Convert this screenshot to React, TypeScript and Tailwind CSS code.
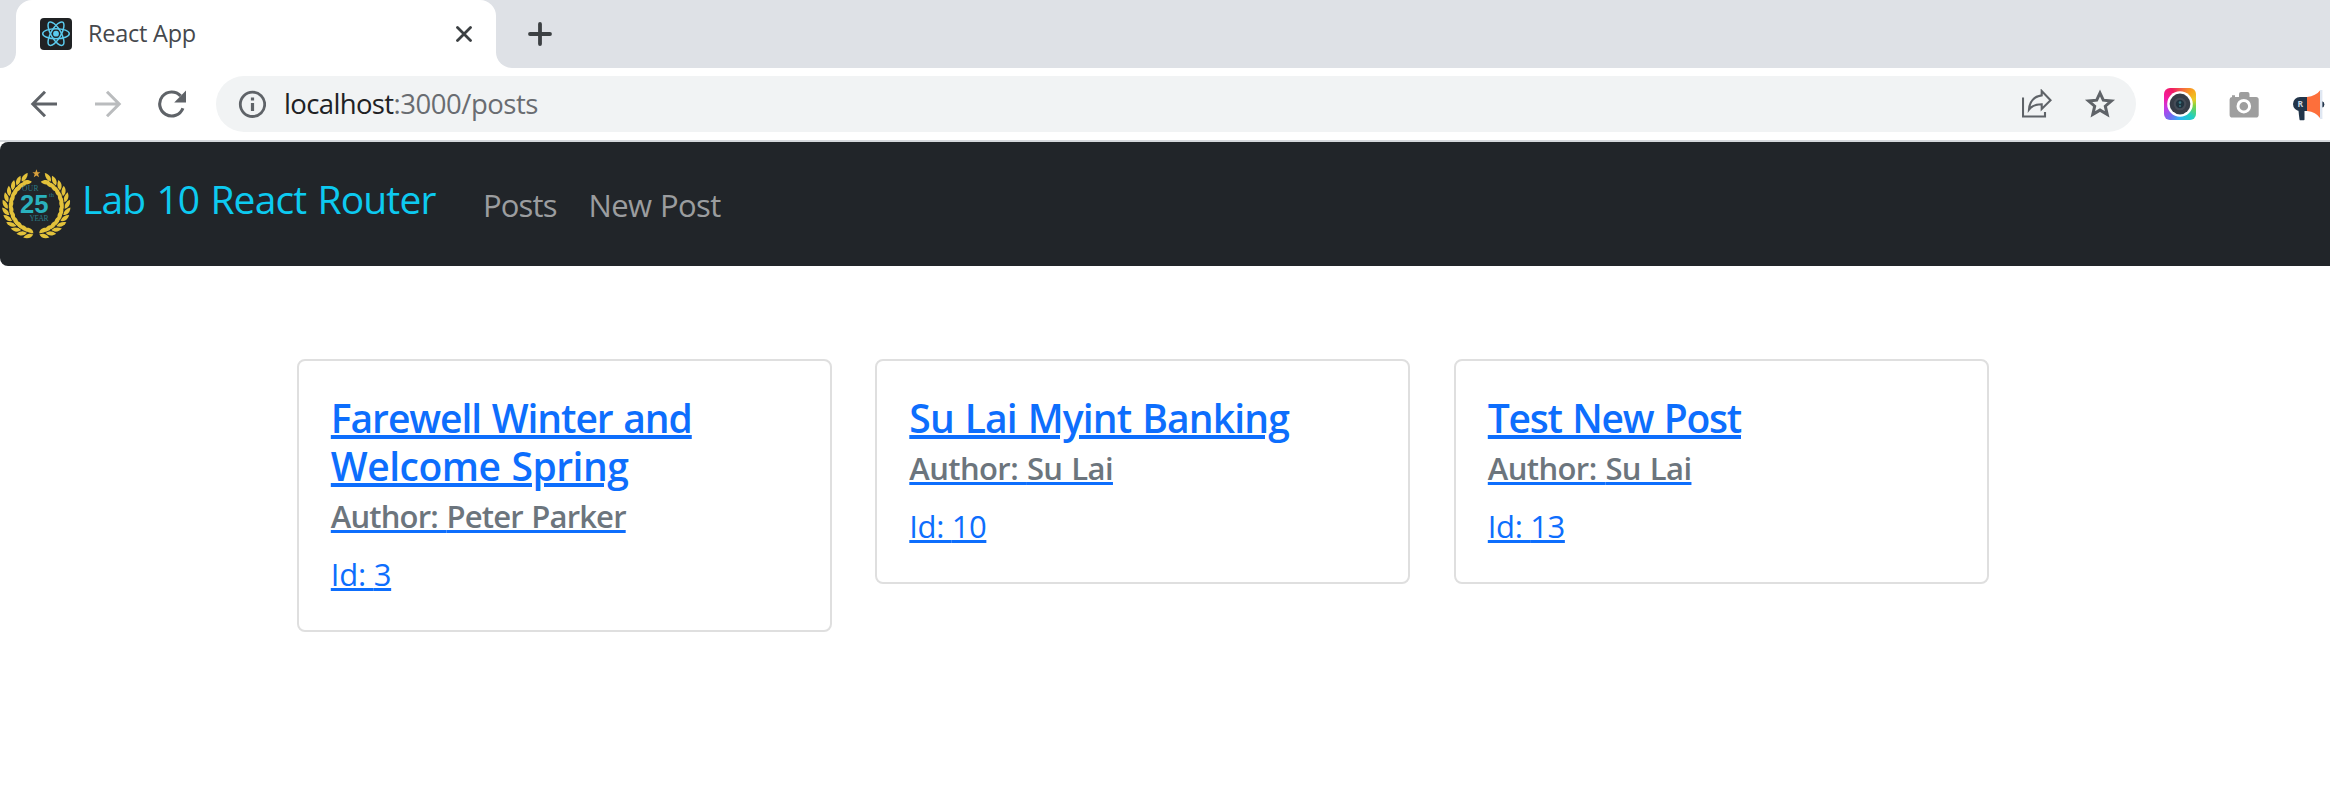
import type { ReactNode } from "react";

type Post = {
  id: ReactNode;
  idClass: string;
  lines: { text: string; className: string }[];
  author: string;
  authorClass: string;
};

const posts: Post[] = [
  {
    id: 3,
    idClass: "tracking-[-0.24px]",
    lines: [
      { text: "Farewell Winter and", className: "tracking-[-1.05px]" },
      { text: "Welcome Spring", className: "tracking-[-0.5px]" },
    ],
    author: "Peter Parker",
    authorClass: "tracking-[-0.84px]",
  },
  {
    id: 10,
    idClass: "tracking-[-0.37px]",
    lines: [{ text: "Su Lai Myint Banking", className: "tracking-[-0.83px]" }],
    author: "Su Lai",
    authorClass: "tracking-[-0.6px]",
  },
  {
    id: 13,
    idClass: "tracking-[-0.37px]",
    lines: [{ text: "Test New Post", className: "tracking-[-1.23px]" }],
    author: "Su Lai",
    authorClass: "tracking-[-0.6px]",
  },
];

function ReactFavicon() {
  return (
    <svg className="size-8 shrink-0" viewBox="0 0 32 32">
      <rect width="32" height="32" rx="4" fill="#202224" />
      <g fill="none" stroke="#5bcbee" strokeWidth="1.5">
        <ellipse cx="16" cy="15.7" rx="13.3" ry="5" />
        <ellipse cx="16" cy="15.7" rx="13.3" ry="5" transform="rotate(60 16 15.7)" />
        <ellipse cx="16" cy="15.7" rx="13.3" ry="5" transform="rotate(120 16 15.7)" />
      </g>
      <circle cx="16" cy="15.7" r="2.9" fill="#5bcbee" />
    </svg>
  );
}

function TabStrip() {
  return (
    <div className="flex h-[68px] bg-[#dee1e6]">
      <div className="w-4 bg-white">
        <div className="h-full w-4 rounded-br-2xl bg-[#dee1e6]" />
      </div>
      <div className="flex w-[480px] items-center rounded-t-2xl bg-white pl-6 pr-6">
        <ReactFavicon />
        <span className="-mt-px ml-4 flex-1 text-[23.5px] tracking-[-0.24px] text-[#45484d]">React App</span>
        <svg className="size-4" viewBox="0 0 16 16" fill="none" stroke="#3c4043" strokeWidth="2.8" strokeLinecap="round">
          <path d="M1.5 1.5l13 13M14.5 1.5l-13 13" />
        </svg>
      </div>
      <div className="w-4 bg-white">
        <div className="h-full w-4 rounded-bl-2xl bg-[#dee1e6]" />
      </div>
      <svg className="ml-4 mt-[22px] size-6" viewBox="0 0 24 24" fill="none" stroke="#3c4043" strokeWidth="3.8" strokeLinecap="round">
        <path d="M12 2v20M2 12h20" />
      </svg>
    </div>
  );
}

function Toolbar() {
  return (
    <div className="flex h-[74px] items-start border-b-2 border-[#d5d8dc] bg-white pt-2">
      <div className="flex h-14 w-[216px] shrink-0 items-center pl-[30px]">
        <svg className="h-7 w-7" viewBox="0 0 28 28" fill="none" stroke="#5f6368" strokeWidth="3">
          <path d="M27 14H3M15 1.8L2.8 14L15 26.2" />
        </svg>
        <svg className="ml-9 h-7 w-7" viewBox="0 0 28 28" fill="none" stroke="#babcbe" strokeWidth="3">
          <path d="M1 14h24M13 1.8L25.2 14L13 26.2" />
        </svg>
        <svg className="ml-9 h-7 w-7" viewBox="0 0 28 28">
          <path d="M24.9 18.2A12 12 0 1 1 22.6 5.9" fill="none" stroke="#5f6368" strokeWidth="3.1" />
          <path d="M28 0.6V12.4H16.2Z" fill="#5f6368" />
        </svg>
      </div>
      <div className="flex h-14 w-[1920px] shrink-0 items-center rounded-full bg-[#f1f3f4] pl-[22px] pr-5">
        <svg className="size-7" viewBox="0 0 28 28" fill="none" stroke="#5f6368" strokeWidth="2.8">
          <circle cx="14.5" cy="14.3" r="12.2" />
          <path d="M14.5 12.9v8M14.5 7.5v3" strokeWidth="3.2" />
        </svg>
        <div className="ml-[18px] flex-1 text-[27.5px] text-[#696c71]">
          <span className="tracking-[-0.64px] text-[#202124]">localhost</span>
          <span className="tracking-[-0.46px]">:3000/posts</span>
        </div>
        <svg className="size-[30px]" viewBox="0 0 30 30" fill="none" stroke="#5f6368" strokeWidth="2.1">
          <path d="M1 8.5V27.5H23V23" />
          <path d="M7 20.5C7.6 12.4 12.5 7.5 19.7 6.4V2L28.6 11.2L19.7 20V15.2C14.2 15.2 9.8 16.8 7 20.5Z" />
        </svg>
        <svg className="ml-8 size-8" viewBox="0 0 32 32" fill="none" stroke="#5f6368" strokeWidth="3">
          <path d="M16 5L19.3 12.2L27.4 12.9L21.3 18.2L23.2 26.4L16 22.1L8.8 26.4L10.7 18.2L4.6 12.9L12.7 12.2Z" />
        </svg>
      </div>
      <div className="ml-7 mt-3 size-8 shrink-0 rounded-md bg-[conic-gradient(from_0deg,#f1584b,#f9a41c_12%,#e9cb28_20%,#7fd43f_27%,#22cfc0_38%,#2bb5f5_50%,#6f6df2_60%,#c23be8_70%,#f51aa0_82%,#f01c63_92%,#f1584b)]">
        <svg className="size-8" viewBox="0 0 32 32">
          <circle cx="16" cy="16" r="12.8" fill="#fff" />
          <circle cx="16" cy="16" r="10.4" fill="#373d47" />
          <circle cx="16" cy="16" r="6.3" fill="#454c57" />
          <circle cx="16" cy="16" r="4.2" fill="#20333f" />
          <circle cx="16" cy="14.6" r="1.3" fill="#3b7480" />
          <circle cx="16" cy="18" r="1" fill="#3b7480" />
        </svg>
      </div>
      <svg className="ml-[33px] mt-4 h-[26px] w-[30px] shrink-0" viewBox="0 0 30 26">
        <path d="M3 5V3.2H6V5H10V2Q10 0 12 0H18.5Q20.5 0 20.5 2V5H27Q29.7 5 29.7 7.6V22.8Q29.7 25.6 27 25.6H3.2Q.6 25.6 .6 22.8V7.6Q.6 5.2 3 5Z" fill="#9e9e9e" />
        <circle cx="14.8" cy="14.2" r="5.8" fill="none" stroke="#fff" strokeWidth="3" />
      </svg>
      <svg className="ml-[33px] mt-3.5 h-8 w-9 shrink-0" viewBox="0 0 36 32">
        <path d="M6 17H12.5V29.5Q12.5 30.3 11.7 30.3H8.6Q7.7 30.3 7.5 29.4Z" fill="#22354a" />
        <path d="M15 7H8A7 7 0 0 0 8 21H15Z" fill="#22354a" />
        <path d="M30 11.3A3.2 3.2 0 0 1 30 17.5Z" fill="#22354a" />
        <path d="M15 7Q24 6 28 .6V28Q24 22 15 21Z" fill="#fd6f3b" />
        <path d="M28 0H30.4V29H28Z" fill="#dfe7f2" />
        <text x="5.5" y="17" fontSize="8.5" fontWeight="700" fill="#c9d3df" fontFamily="Open Sans, sans-serif">R</text>
      </svg>
    </div>
  );
}

const leafAngles = [28, 41, 54, 67, 80, 93, 106, 119, 132, 145, 158, 171];

function Branch() {
  return (
    <g fill="#e3c23a">
      {leafAngles.map((a) => (
        <g key={a} transform={`rotate(${a}) translate(0 -28)`}>
          <path d="M1.4 .2C-2.6 .4 -6 -1.6 -8 -5.2C-3.2 -6.4 .8 -4 1.4 .2Z" />
          <path d="M1.4 .2C-2 -1 -5.8 .8 -7.4 4.6C-3 6.4 1 4.2 1.4 .2Z" />
        </g>
      ))}
      <path d="M13 -24.8A28 28 0 0 1 0 28" fill="none" stroke="#212529" strokeWidth=".9" />
    </g>
  );
}

function AnniversaryLogo() {
  return (
    <svg className="mt-[26px] h-[76px] w-[72px] shrink-0" viewBox="0 0 72 76">
      <g transform="translate(36.3 38)">
        <Branch />
        <g transform="scale(-1 1)">
          <Branch />
        </g>
      </g>
      <path d="M36.4 1.2L37.5 4.2H40.4L38.1 6.1L39 9.2L36.4 7.4L33.8 9.2L34.7 6.1L32.4 4.2H35.3Z" fill="#d9a03c" />
      <text x="22" y="22.8" fontSize="7.5" fill="#2b7c86" fontFamily="Liberation Serif, serif" textLength="16.5">OUR</text>
      <text x="20" y="45" fontSize="26" fontWeight="700" fill="#2ab1bd" fontFamily="Liberation Sans, sans-serif" textLength="28.5" lengthAdjust="spacingAndGlyphs">25</text>
      <text x="49" y="29" fontSize="6.5" fill="#2b7c86" fontFamily="Liberation Serif, serif">th</text>
      <text x="29.5" y="53.4" fontSize="7.5" fill="#2b7c86" fontFamily="Liberation Serif, serif" textLength="19">YEAR</text>
    </svg>
  );
}

function Navbar() {
  return (
    <nav className="flex h-[124px] items-start rounded-l-lg bg-[#212529]">
      <AnniversaryLogo />
      <a href="#" className="ml-2.5 mt-[27px] w-[390px] text-[39px] leading-[60px] tracking-[-0.85px] text-[#0dcaf0] [word-spacing:1.8px]">
        Lab 10 React Router
      </a>
      <div className="ml-[11px] mt-[39px] flex text-[31px] leading-[48px] text-[#9b9d9f]">
        <a href="#" className="w-[105.5px] tracking-[-0.85px]">Posts</a>
        <a href="#" className="tracking-[-0.6px] [word-spacing:1px]">New Post</a>
      </div>
    </nav>
  );
}

function PostCard({ post }: { post: Post }) {
  return (
    <a
      href="#"
      className="block w-[535px] rounded-lg border-2 border-[#dfdfdf] bg-white px-8 py-8 text-[#0d6efd] underline-offset-2"
    >
      <h3 className="pt-px text-[39px] font-semibold leading-[48px] underline decoration-4 [word-spacing:1.5px]">
        {post.lines.map((line) => (
          <span key={line.text} className={line.className}>
            {line.text}{" "}
          </span>
        ))}
      </h3>
      <h4 className={`mt-[7px] text-[31px] font-semibold leading-[38.4px] text-[#6c757d] underline decoration-[#0d6efd] decoration-[3px] [word-spacing:1.4px] ${post.authorClass}`}>
        Author: {post.author}
      </h4>
      <p className={`mt-4 text-[31px] leading-[47px] underline decoration-[3px] ${post.idClass}`}>Id: {post.id}</p>
    </a>
  );
}

export default function App() {
  return (
    <div className="h-[812px] w-[2330px] overflow-hidden bg-white font-['Open_Sans',sans-serif]">
      <TabStrip />
      <Toolbar />
      <Navbar />
      <main className="flex items-start gap-[43.5px] pl-[296.8px] pt-[93px]">
        {posts.map((post, i) => (
          <PostCard key={i} post={post} />
        ))}
      </main>
    </div>
  );
}
